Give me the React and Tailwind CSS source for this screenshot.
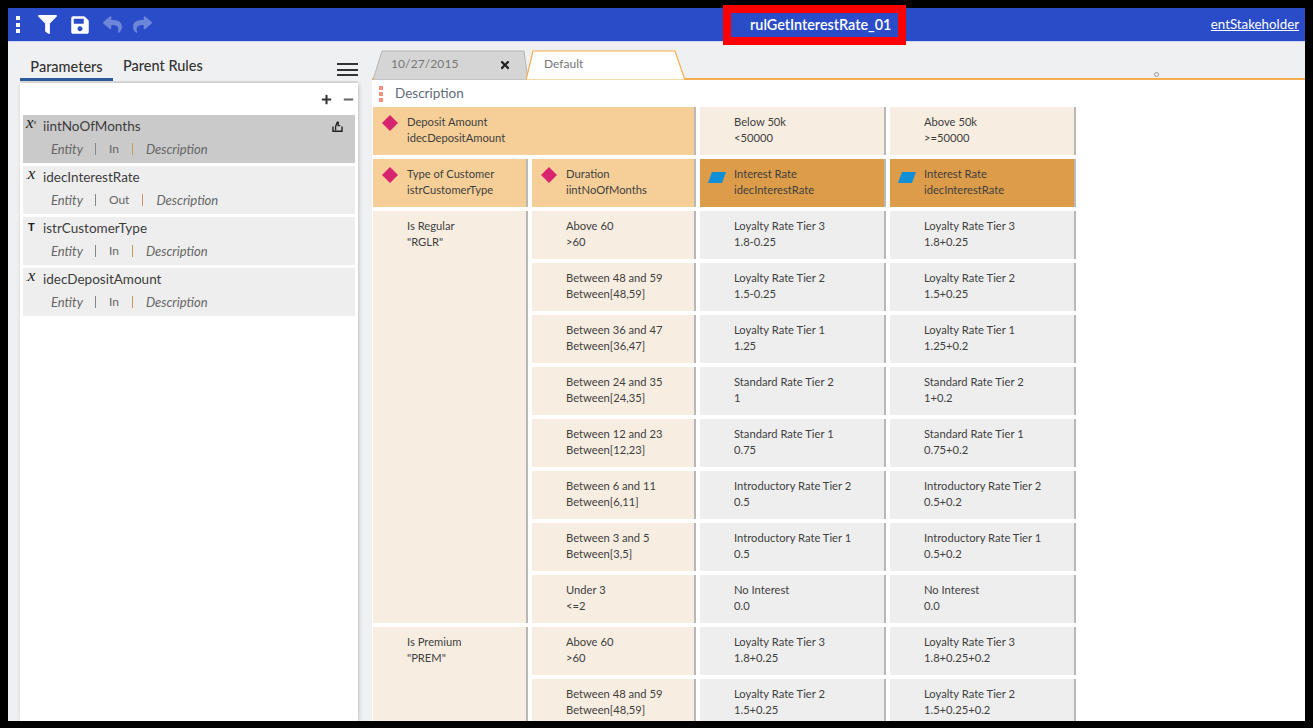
import { FaFilter, FaSave, FaReply, FaShare, FaTimes, FaPlus, FaMinus } from "react-icons/fa";

const parameters = [
  { name: "iintNoOfMonths", type: "x2", dir: "In", active: true },
  { name: "idecInterestRate", type: "x", dir: "Out" },
  { name: "istrCustomerType", type: "T", dir: "In" },
  { name: "idecDepositAmount", type: "x", dir: "In" },
];

const regularRows = [
  ["Above 60", ">60", "Loyalty Rate Tier 3", "1.8-0.25", "1.8+0.25"],
  ["Between 48 and 59", "Between[48,59]", "Loyalty Rate Tier 2", "1.5-0.25", "1.5+0.25"],
  ["Between 36 and 47", "Between[36,47]", "Loyalty Rate Tier 1", "1.25", "1.25+0.2"],
  ["Between 24 and 35", "Between[24,35]", "Standard Rate Tier 2", "1", "1+0.2"],
  ["Between 12 and 23", "Between[12,23]", "Standard Rate Tier 1", "0.75", "0.75+0.2"],
  ["Between 6 and 11", "Between[6,11]", "Introductory Rate Tier 2", "0.5", "0.5+0.2"],
  ["Between 3 and 5", "Between[3,5]", "Introductory Rate Tier 1", "0.5", "0.5+0.2"],
  ["Under 3", "<=2", "No Interest", "0.0", "0.0"],
];

const premiumRows = [
  ["Above 60", ">60", "Loyalty Rate Tier 3", "1.8+0.25", "1.8+0.25+0.2"],
  ["Between 48 and 59", "Between[48,59]", "Loyalty Rate Tier 2", "1.5+0.25", "1.5+0.25+0.2"],
];

function Diamond() {
  return (
    <svg width="16" height="16" viewBox="0 0 16 16" className="shrink-0">
      <path d="M8 0 L16 8 L8 16 L0 8 Z" fill="#d6246e" />
    </svg>
  );
}

function Slant() {
  return (
    <svg width="18" height="11" viewBox="0 0 18 11" className="mt-[5px] shrink-0">
      <path d="M4 0 H18 L14 11 H0 Z" fill="#0f8fd6" />
    </svg>
  );
}

function HandIcon() {
  return (
    <svg width="11" height="11" viewBox="0 0 11 11" className="mt-[3px] mr-[12px] ml-auto" fill="none" stroke="#222">
      <path d="M1 5.5 V10.2 H10 V5.5" strokeWidth="1.4" />
      <path d="M3.6 9.5 V5.5 L5.4 1 L6.4 1.4 L6 4.6 H8.2" strokeWidth="1.3" />
    </svg>
  );
}

function Cell({ title, sub, bg = "bg-[#f7ede1]", icon, className = "" }) {
  return (
    <div className={`flex h-full border-r-2 border-[#b8b8b8] pt-[7px] text-[11.2px] leading-[16px] text-[#3f3f3f] ${bg} ${className}`}>
      <div className="flex w-[34px] shrink-0 items-start justify-center pt-[1px]">{icon}</div>
      <div className="whitespace-nowrap">
        <div>{title}</div>
        <div>{sub}</div>
      </div>
    </div>
  );
}

function TypeMark({ type }) {
  if (type === "T") {
    return <span className="w-[20px] pl-[5px] font-['Liberation_Sans',sans-serif] text-[11px] leading-[14px] font-bold text-[#222]">T</span>;
  }
  return (
    <span className="w-[20px] pl-[3px] font-['Liberation_Serif',serif] text-[17px] leading-[9px] text-[#222] italic">
      {type === "x2" ? (
        <>
          x<span className="relative top-[-4px] text-[7px]">s</span>
        </>
      ) : (
        <>
          <span className="text-[7px]">.</span>x
        </>
      )}
    </span>
  );
}

function ParameterRow({ item }) {
  return (
    <div className={`flex h-[48px] flex-col pt-[3px] ${item.active ? "bg-[#cacaca]" : "bg-[#eeeeee]"}`}>
      <div className="flex items-start">
        <TypeMark type={item.type} />
        <span className="text-[13.5px] leading-[17px] text-[#3d3d3d]">{item.name}</span>
        {item.active ? <HandIcon /> : null}
      </div>
      <div className="mt-[6px] flex items-center pl-[28px] text-[13px] leading-[16px] text-[#666]">
        <span className="italic">Entity</span>
        <span className="mx-[12.5px] h-[12px] w-px bg-[#888]" />
        <span className="text-[12px] not-italic">{item.dir}</span>
        <span className="mr-[13px] ml-[13px] h-[12px] w-px bg-[#c9985a]" />
        <span className="italic">Description</span>
      </div>
    </div>
  );
}

function RuleRows({ rows }) {
  return rows.map((row) => (
    <div key={row[0]} className="contents">
      <Cell title={row[0]} sub={row[1]} />
      <Cell title={row[2]} sub={row[3]} bg="bg-[#eeeeee]" />
      <Cell title={row[2]} sub={row[4]} bg="bg-[#eeeeee]" />
    </div>
  ));
}

export default function App() {
  return (
    <div className="flex h-[728px] flex-col overflow-hidden bg-black px-2 pt-2 pb-[7px] font-['Lato',sans-serif]">
      <header className="relative flex h-[33px] shrink-0 items-center bg-[#2a4cc8] text-white">
        <div className="ml-[8px] flex flex-col gap-[2.5px]">
          <span className="h-[4px] w-[4px] bg-white" />
          <span className="h-[4px] w-[4px] bg-white" />
          <span className="h-[4px] w-[4px] bg-white" />
        </div>
        <FaFilter className="ml-[18px] text-[19px]" />
        <FaSave className="ml-[13px] text-[20px]" />
        <FaReply className="ml-[13px] text-[19px] text-[#6d86d8]" />
        <FaShare className="ml-[11px] text-[19px] text-[#6d86d8]" />
        <div className="absolute top-[-3px] left-[715px] flex h-[40px] w-[183px] items-center border-[8px] border-[#ff0000] bg-[#2a4cc8] pl-[19px] text-[14.4px] font-semibold whitespace-nowrap">
          rulGetInterestRate_01
        </div>
        <a className="ml-auto pr-[6px] text-[13.3px] underline">entStakeholder</a>
      </header>

      <div className="flex min-h-0 flex-1 border-t border-[#cfd6ee] bg-[#eff0f2]">
        <aside className="flex w-[364px] shrink-0 flex-col pt-[13px] pl-[12px]">
          <div className="flex h-[28px] w-[338px] items-start border-b-2 border-[#dcdcdc]">
            <button className="h-[26px] w-[93px] border-b-[3px] border-[#2a5a9a] text-center text-[14.5px] leading-[22px] font-medium text-[#333]">Parameters</button>
            <button className="ml-[10px] text-[14.5px] leading-[22px] font-medium text-[#333]">Parent Rules</button>
            <div className="mt-[8px] ml-auto flex h-[13px] w-[21px] flex-col justify-between">
              <span className="h-[2px] bg-[#333]" />
              <span className="h-[2px] bg-[#333]" />
              <span className="h-[2px] bg-[#333]" />
            </div>
          </div>
          <div className="w-[338px] flex-1 bg-white px-[3px] shadow-[1px_1px_4px_rgba(0,0,0,0.2)]">
            <div className="flex h-[32px] items-center justify-end gap-[11px] pr-[1px]">
              <FaPlus className="text-[11px] text-[#333]" />
              <FaMinus className="text-[11px] text-[#666]" />
            </div>
            <div className="flex flex-col gap-[3px]">
              {parameters.map((item) => (
                <ParameterRow key={item.name} item={item} />
              ))}
            </div>
          </div>
        </aside>

        <main className="flex min-w-0 flex-1 flex-col">
          <div className="relative flex h-[38px] shrink-0 items-end border-b-2 border-[#f5ad4f] pl-px">
            <div className="relative -mb-[2px] h-[30px] w-[155px] text-[12px] text-[#777]">
              <svg className="absolute inset-0 h-full w-full" viewBox="0 0 155 30" preserveAspectRatio="none">
                <path d="M0 30 L9 1 H151 L155 30 Z" fill="#d5d5d5" stroke="#b5b5b5" />
              </svg>
              <span className="absolute top-[5px] left-[18px] tracking-[0.1px]">10/27/2015</span>
              <FaTimes className="absolute top-[9px] left-[126px] text-[12px] text-[#222]" />
            </div>
            <div className="relative -mb-[2px] -ml-[2px] h-[30px] w-[160px] text-[12px] text-[#777]">
              <svg className="absolute inset-0 h-full w-full" viewBox="0 0 160 30" preserveAspectRatio="none">
                <path d="M0 30 L7 1 H149 L159 30 Z" fill="#ffffff" stroke="#f5ad4f" strokeWidth="1.2" />
              </svg>
              <span className="absolute top-[5px] left-[18px]">Default</span>
            </div>
            <span className="absolute top-[30px] left-[782px] h-[5px] w-[5px] rounded-full border border-[#999]" />
          </div>

          <div className="min-h-0 flex-1 overflow-hidden bg-white pl-px">
            <div className="flex h-[27px] items-center">
              <div className="ml-[6px] flex flex-col gap-[2px]">
                <span className="h-[4px] w-[4px] bg-[#f98f7c]" />
                <span className="h-[4px] w-[4px] bg-[#f98f7c]" />
                <span className="h-[4px] w-[4px] bg-[#f98f7c]" />
              </div>
              <span className="ml-[12px] text-[13.5px] text-[#5f6b7a]">Description</span>
            </div>
            <div className="grid grid-cols-[154.5px_163.5px_185.5px_186px] auto-rows-[48px] gap-x-[4.5px] gap-y-[4px]">
              <Cell className="col-span-2" title="Deposit Amount" sub="idecDepositAmount" bg="bg-[#f6cf98]" icon={<Diamond />} />
              <Cell title="Below 50k" sub="<50000" />
              <Cell title="Above 50k" sub=">=50000" />

              <Cell title="Type of Customer" sub="istrCustomerType" bg="bg-[#f6cf98]" icon={<Diamond />} />
              <Cell title="Duration" sub="iintNoOfMonths" bg="bg-[#f6cf98]" icon={<Diamond />} />
              <Cell title="Interest Rate" sub="idecInterestRate" bg="bg-[#dc9c4a]" icon={<Slant />} />
              <Cell title="Interest Rate" sub="idecInterestRate" bg="bg-[#dc9c4a]" icon={<Slant />} />

              <Cell className="row-span-8" title="Is Regular" sub={'"RGLR"'} />
              <div className="col-span-3 row-span-8 grid grid-cols-subgrid grid-rows-subgrid">
                <RuleRows rows={regularRows} />
              </div>

              <Cell className="row-span-2" title="Is Premium" sub={'"PREM"'} />
              <div className="col-span-3 row-span-2 grid grid-cols-subgrid grid-rows-subgrid">
                <RuleRows rows={premiumRows} />
              </div>
            </div>
          </div>
        </main>
      </div>
    </div>
  );
}
